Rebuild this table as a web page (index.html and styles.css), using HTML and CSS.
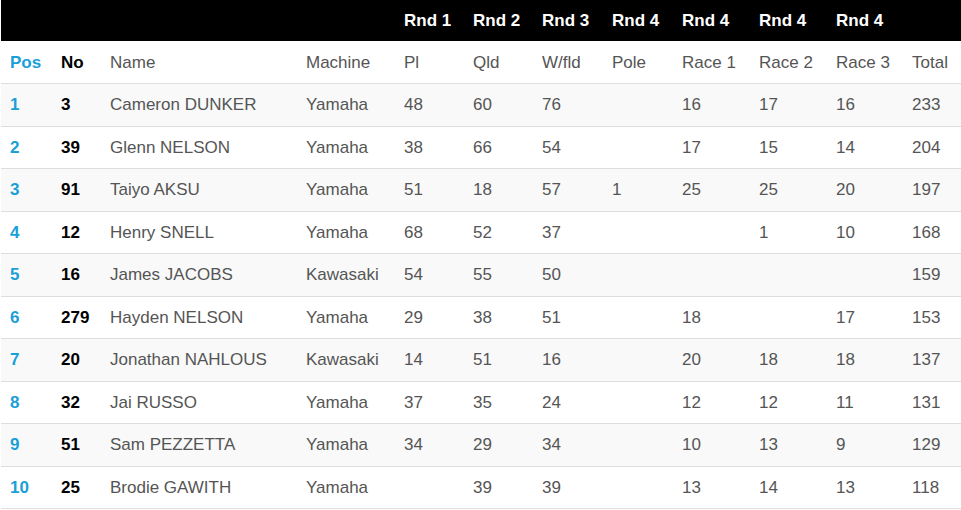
FILE: index.html
```html
<!DOCTYPE html>
<html>
<head>
<meta charset="utf-8">
<link rel="stylesheet" href="styles.css">
</head>
<body>
<table class="standings">
  <colgroup>
    <col class="c-pos"><col class="c-no"><col class="c-name"><col class="c-mach">
    <col class="c-69"><col class="c-69"><col class="c-70"><col class="c-70">
    <col class="c-77"><col class="c-77"><col class="c-76"><col class="c-tot">
  </colgroup>
  <thead>
    <tr class="rounds">
      <th></th><th></th><th></th><th></th>
      <th>Rnd 1</th><th>Rnd 2</th><th>Rnd 3</th><th>Rnd 4</th><th>Rnd 4</th><th>Rnd 4</th><th>Rnd 4</th><th></th>
    </tr>
    <tr class="labels">
      <th class="pos">Pos</th><th class="no">No</th><th>Name</th><th>Machine</th>
      <th>Pl</th><th>Qld</th><th>W/fld</th><th>Pole</th><th>Race 1</th><th>Race 2</th><th>Race 3</th><th>Total</th>
    </tr>
  </thead>
  <tbody>
    <tr><td class="pos">1</td><td class="no">3</td><td>Cameron DUNKER</td><td>Yamaha</td><td>48</td><td>60</td><td>76</td><td></td><td>16</td><td>17</td><td>16</td><td>233</td></tr>
    <tr><td class="pos">2</td><td class="no">39</td><td>Glenn NELSON</td><td>Yamaha</td><td>38</td><td>66</td><td>54</td><td></td><td>17</td><td>15</td><td>14</td><td>204</td></tr>
    <tr><td class="pos">3</td><td class="no">91</td><td>Taiyo AKSU</td><td>Yamaha</td><td>51</td><td>18</td><td>57</td><td>1</td><td>25</td><td>25</td><td>20</td><td>197</td></tr>
    <tr><td class="pos">4</td><td class="no">12</td><td>Henry SNELL</td><td>Yamaha</td><td>68</td><td>52</td><td>37</td><td></td><td></td><td>1</td><td>10</td><td>168</td></tr>
    <tr><td class="pos">5</td><td class="no">16</td><td>James JACOBS</td><td>Kawasaki</td><td>54</td><td>55</td><td>50</td><td></td><td></td><td></td><td></td><td>159</td></tr>
    <tr><td class="pos">6</td><td class="no">279</td><td>Hayden NELSON</td><td>Yamaha</td><td>29</td><td>38</td><td>51</td><td></td><td>18</td><td></td><td>17</td><td>153</td></tr>
    <tr><td class="pos">7</td><td class="no">20</td><td>Jonathan NAHLOUS</td><td>Kawasaki</td><td>14</td><td>51</td><td>16</td><td></td><td>20</td><td>18</td><td>18</td><td>137</td></tr>
    <tr><td class="pos">8</td><td class="no">32</td><td>Jai RUSSO</td><td>Yamaha</td><td>37</td><td>35</td><td>24</td><td></td><td>12</td><td>12</td><td>11</td><td>131</td></tr>
    <tr><td class="pos">9</td><td class="no">51</td><td>Sam PEZZETTA</td><td>Yamaha</td><td>34</td><td>29</td><td>34</td><td></td><td>10</td><td>13</td><td>9</td><td>129</td></tr>
    <tr><td class="pos">10</td><td class="no">25</td><td>Brodie GAWITH</td><td>Yamaha</td><td></td><td>39</td><td>39</td><td></td><td>13</td><td>14</td><td>13</td><td>118</td></tr>
  </tbody>
</table>
</body>
</html>
```
FILE: styles.css
```css
html, body {
  margin: 0;
  padding: 0;
  background: #fff;
}
body {
  padding-left: 1px;
  font-family: "Liberation Sans", Arial, sans-serif;
  font-size: 17px;
  color: #555;
}
.standings {
  border-collapse: collapse;
  table-layout: fixed;
  width: 960px;
}
.c-pos { width: 51px; }
.c-no { width: 49px; }
.c-name { width: 196px; }
.c-mach { width: 98px; }
.c-69 { width: 69px; }
.c-70 { width: 70px; }
.c-77 { width: 77px; }
.c-76 { width: 76px; }
.c-tot { width: 58px; }

.standings th,
.standings td {
  text-align: left;
  padding: 0 0 0 9px;
  white-space: nowrap;
  font-weight: normal;
}
.rounds th {
  background: #000;
  color: #fff;
  font-weight: bold;
  height: 41px;
}
.labels th {
  height: 41px;
  padding-top: 1px;
  border-bottom: 1px solid #ddd;
}
.standings td {
  height: 40.5px;
  padding-top: 1px;
  border-bottom: 1px solid #ddd;
}
.standings tbody tr:nth-child(odd) td {
  background: #f9f9f9;
}
.standings .pos {
  color: #1a9fd8;
  font-weight: bold;
}
.standings .no {
  color: #000;
  font-weight: bold;
}
```
